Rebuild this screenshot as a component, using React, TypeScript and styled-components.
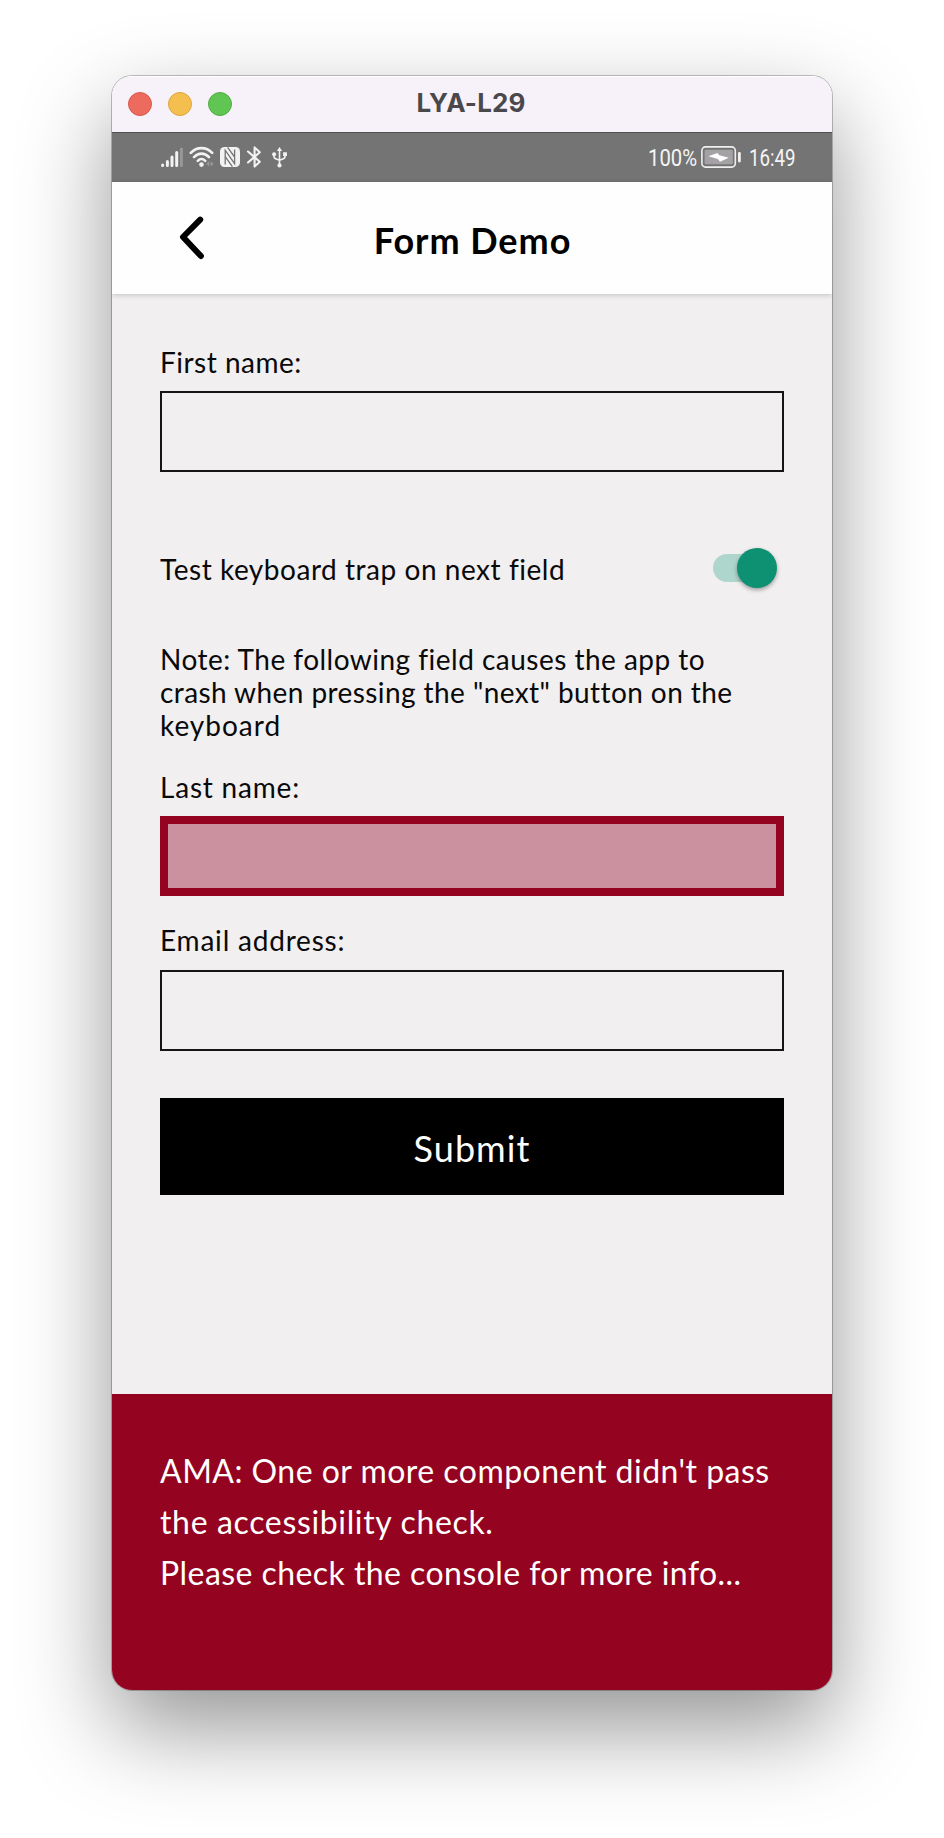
import React from 'react';
import styled, { createGlobalStyle } from 'styled-components';

const GlobalStyle = createGlobalStyle`
  *, *::before, *::after { box-sizing: border-box; }
  body { margin: 0; background: #fff; }
`;

const Page = styled.div`
  height: 1838px;
  padding: 76px 112px 0;
  overflow: hidden;
  font-family: Lato, sans-serif;
  color: #0a090a;
`;

const Window = styled.main`
  display: flex;
  flex-direction: column;
  width: 720px;
  height: 1614px;
  border-radius: 20px;
  overflow: hidden;
  background: #f1eff0;
  box-shadow: 0 0 0 1px rgba(0, 0, 0, 0.24), 0 38px 92px rgba(0, 0, 0, 0.42);
`;

const TitleBar = styled.div`
  display: grid;
  grid-template-columns: 1fr auto 1fr;
  align-items: center;
  flex: none;
  height: 56px;
  padding: 0 18px 1px 16px;
  background: #f7f2f9;
  border-top: 1px solid #fff;
`;

const Lights = styled.div`
  display: flex;
  gap: 16px;
`;

const Light = styled.span<{ $fill: string; $edge: string }>`
  width: 24px;
  height: 24px;
  border-radius: 50%;
  background: ${(p) => p.$fill};
  border: 1px solid ${(p) => p.$edge};
`;

const DeviceName = styled.span`
  font: 700 26px/30px Inter, sans-serif;
  letter-spacing: 0.14px;
  color: #4b484c;
  padding-bottom: 2px;
`;

const StatusBar = styled.div`
  display: flex;
  align-items: center;
  justify-content: space-between;
  flex: none;
  height: 50px;
  padding: 0 36px 0 49px;
  background: #747474;
  border-top: 1px solid #4e4e4e;
`;

const IconRow = styled.div`
  display: flex;
  align-items: center;
  gap: 6px;
  padding-bottom: 1px;
  svg { display: block; }
`;

const PowerGroup = styled.div`
  display: flex;
  align-items: center;
`;

const StatusText = styled.span<{ $width: number; $scale: number }>`
  width: ${(p) => p.$width}px;
  font: 400 24px/28px Roboto, sans-serif;
  color: #f4f4f4;
  white-space: nowrap;
  transform: scaleX(${(p) => p.$scale});
  transform-origin: left center;
  padding-top: 1px;
`;

const Header = styled.header`
  display: grid;
  grid-template-columns: 1fr auto 1fr;
  align-items: center;
  flex: none;
  height: 112px;
  background: #fefefe;
  box-shadow: 0 1px 5px rgba(0, 0, 0, 0.2);
`;

const BackButton = styled.button`
  justify-self: start;
  margin-left: 66px;
  padding: 0;
  border: 0;
  background: none;
  svg { display: block; }
`;

const Title = styled.h1`
  margin: 0;
  padding: 4px 0 0 1px;
  font-size: 36px;
  line-height: 44px;
  font-weight: 700;
  letter-spacing: 0.96px;
  color: #000;
`;

const Form = styled.form`
  display: flex;
  flex-direction: column;
  flex: 1;
  padding: 51px 48px 0;
`;

const Field = styled.div<{ $gap: number }>`
  display: flex;
  flex-direction: column;
  gap: ${(p) => p.$gap}px;
`;

const Label = styled.label<{ $track?: number }>`
  font-size: 28px;
  line-height: 34px;
  white-space: nowrap;
  letter-spacing: ${(p) => p.$track ?? 0.54}px;
`;

const TextInput = styled.input<{ $invalid?: boolean }>`
  width: 100%;
  height: ${(p) => (p.$invalid ? 80 : 81)}px;
  border-radius: 0;
  outline: 0;
  background: ${(p) => (p.$invalid ? '#cb919f' : 'transparent')};
  border: ${(p) => (p.$invalid ? '8px solid #940320' : '2px solid #161415')};
`;

const ToggleRow = styled.div`
  display: flex;
  align-items: center;
  justify-content: space-between;
  height: 40px;
  margin: 76px 0 55px;
  padding-right: 7px;
  ${Label} { padding-top: 2px; }
`;

const Switch = styled.div`
  display: flex;
  align-items: center;
  justify-content: flex-end;
  width: 64px;
  height: 28px;
  border-radius: 14px;
  background: linear-gradient(90deg, #afd6cc 0 50px, transparent 50px);
`;

const Thumb = styled.span`
  flex: none;
  width: 40px;
  height: 40px;
  border-radius: 50%;
  background: #0e9072;
  box-shadow: 0 2px 4px rgba(0, 0, 0, 0.35);
`;

const Note = styled.p`
  margin: 0 0 28px;
  font-size: 28px;
  line-height: 33px;
  white-space: nowrap;
`;

const Line = styled.span<{ $track: number }>`
  display: block;
  letter-spacing: ${(p) => p.$track}px;
`;

const LastNameGroup = styled.div`
  margin-bottom: 27px;
`;

const SubmitButton = styled.button`
  height: 97px;
  margin-top: 47px;
  padding: 3px 0 0;
  border: 0;
  background: #000;
  color: #fff;
  font: 400 36px/44px Lato, sans-serif;
  letter-spacing: 1.07px;
`;

const Alert = styled.section`
  display: grid;
  grid-template-rows: 51px 52px 49px;
  align-items: center;
  align-content: start;
  flex: none;
  height: 296px;
  padding: 51px 48px 0;
  background: #940320;
  color: #fff;
  font-size: 32px;
  line-height: 50px;
  white-space: nowrap;
`;

const SignalIcon = () => (
  <svg width="22" height="22" viewBox="0 0 22 22" stroke="#f2f2f2" strokeWidth="3" strokeLinecap="round">
    <path d="M1.6 19v.4M6.4 15.5v3.9M11 11v8.4M15.7 6.4v13" />
    <path d="M20.4 3v16.4" stroke="#979797" />
  </svg>
);

const WifiIcon = () => (
  <svg width="25" height="22" viewBox="0 0 25 22" fill="none" stroke="#f2f2f2" strokeWidth="2.6" strokeLinecap="round">
    <path d="M1.8 6.9C7.8.5 17.2.5 23.2 6.9M5 11.1c4.4-4.6 10.6-4.6 15 0M8.8 14.8c2.2-2.2 5.2-2.2 7.4 0" />
    <circle cx="12.5" cy="18.6" r="2.3" fill="#f2f2f2" stroke="none" />
    <path d="M20.3 15.2v5l-3-2.5zM21.7 15.2v5l3-2.5z" fill="#9b9b9b" stroke="none" />
  </svg>
);

const NfcIcon = () => (
  <svg width="20" height="20" viewBox="0 0 20 20" fill="none">
    <rect width="20" height="20" rx="4.5" fill="#f2f2f2" />
    <path d="M5.2 17.4V3.2L14.6 16.6V2.6" stroke="#747474" strokeWidth="1.3" />
    <path d="M7.6 0.4 14.6 10M5.2 9.6 12.4 19.6" stroke="#747474" strokeWidth="1.3" />
  </svg>
);

const BluetoothIcon = () => (
  <svg width="16" height="22" viewBox="0 0 16 22" fill="none" stroke="#f2f2f2" strokeWidth="2.1" strokeLinejoin="round" strokeLinecap="round">
    <path d="M2 5.5 13.8 15.8 8.6 20.6V1.4l5.2 4.8L2 16.5" />
  </svg>
);

const UsbIcon = () => (
  <svg width="15" height="22" viewBox="0 0 15 22" fill="none" stroke="#f2f2f2" strokeWidth="1.6">
    <path d="M7.5 3v16M2 8v2.2c0 1.6.8 2.4 2.2 2.8l3.3 1.2M13 8v2.2c0 1.6-.8 2.4-2.2 2.8l-3.3 1.2" />
    <path d="m7.5 1 2.6 4H4.9z" fill="#f2f2f2" stroke="none" />
    <circle cx="2.1" cy="8.2" r="2" fill="#f2f2f2" stroke="none" />
    <path d="M11.1 6.3h3.8v3.8h-3.8z" fill="#f2f2f2" stroke="none" />
    <circle cx="7.5" cy="19.4" r="2.1" fill="#f2f2f2" stroke="none" />
  </svg>
);

const UsbSlot = styled.span`
  margin-left: 4px;
`;

const BatterySlot = styled.span`
  display: block;
  margin: 0 8px 1px 3px;
  svg { display: block; }
`;

const BatteryIcon = () => (
  <svg width="40" height="22" viewBox="0 0 40 22">
    <rect x="0.9" y="0.9" width="33.4" height="20.2" rx="3.6" fill="none" stroke="#f0f0f0" strokeWidth="1.6" />
    <rect x="3.6" y="3.8" width="28.2" height="14.4" rx="1" fill="#a5a2a5" />
    <path d="M7.4 10.3 16.4 7l2 2.2 9.4 2.6-8.8 4-2.2-2.8z" fill="#fff" />
    <rect x="37" y="6" width="2.8" height="10.4" rx="1.3" fill="#f0f0f0" />
  </svg>
);

export default function App() {
  return (
    <Page>
      <GlobalStyle />
      <Window>
        <TitleBar>
          <Lights>
            <Light $fill="#ed6a5e" $edge="#d9584e" />
            <Light $fill="#f5bf4f" $edge="#dba43c" />
            <Light $fill="#61c554" $edge="#50ad42" />
          </Lights>
          <DeviceName>LYA-L29</DeviceName>
        </TitleBar>

        <StatusBar>
          <IconRow>
            <SignalIcon />
            <WifiIcon />
            <NfcIcon />
            <BluetoothIcon />
            <UsbSlot><UsbIcon /></UsbSlot>
          </IconRow>
          <PowerGroup>
            <StatusText $width={50} $scale={0.845}>100%</StatusText>
            <BatterySlot><BatteryIcon /></BatterySlot>
            <StatusText $width={47} $scale={0.78}>16:49</StatusText>
          </PowerGroup>
        </StatusBar>

        <Header>
          <BackButton type="button" aria-label="Back">
            <svg width="30" height="48" viewBox="0 0 30 48" fill="none" stroke="#000" strokeWidth="6" strokeLinecap="round" strokeLinejoin="round">
              <path d="M22.2 5.6 5 23 22.9 42" />
            </svg>
          </BackButton>
          <Title>Form Demo</Title>
        </Header>

        <Form>
          <Field $gap={12}>
            <Label htmlFor="first" $track={0.5}>First name:</Label>
            <TextInput id="first" />
          </Field>

          <ToggleRow>
            <Label>Test keyboard trap on next field</Label>
            <Switch role="switch" aria-checked="true"><Thumb /></Switch>
          </ToggleRow>

          <Note>
            <Line $track={0.48}>Note: The following field causes the app to</Line>
            <Line $track={0.42}>crash when pressing the "next" button on the</Line>
            <Line $track={1}>keyboard</Line>
          </Note>

          <LastNameGroup>
            <Field $gap={12}>
              <Label htmlFor="last" $track={0.8}>Last name:</Label>
              <TextInput id="last" $invalid />
            </Field>
          </LastNameGroup>

          <Field $gap={13}>
            <Label htmlFor="email" $track={0.8}>Email address:</Label>
            <TextInput id="email" />
          </Field>

          <SubmitButton type="button">Submit</SubmitButton>
        </Form>

        <Alert role="alert">
          <Line $track={0.47}>AMA: One or more component didn't pass</Line>
          <Line $track={0.65}>the accessibility check.</Line>
          <Line $track={0.44}>Please check the console for more info...</Line>
        </Alert>
      </Window>
    </Page>
  );
}
